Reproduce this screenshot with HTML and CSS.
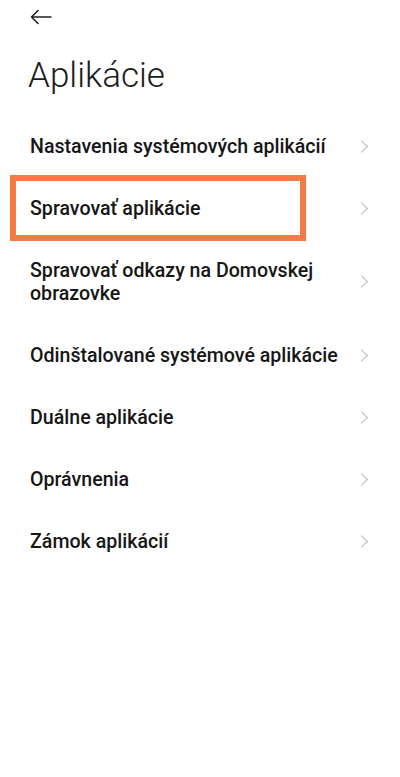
FILE: index.html
```html
<!DOCTYPE html>
<html lang="sk">
<head>
<meta charset="utf-8">
<link rel="stylesheet" href="styles.css">
</head>
<body>
<div class="screen">
  <header class="topbar">
    <svg class="back" width="22" height="16" viewBox="0 0 22 16" fill="none" stroke="#222" stroke-width="1.6" stroke-linecap="round" stroke-linejoin="round">
      <path d="M21 8H1.5M8 1.5L1.5 8L8 14.5"/>
    </svg>
  </header>
  <h1 class="title">Aplikácie</h1>
  <ul class="list">
    <li class="row"><span class="label">Nastavenia systémových aplikácií</span><span class="chev"></span></li>
    <li class="row highlighted"><span class="label">Spravovať aplikácie</span><span class="chev"></span><span class="mark"></span></li>
    <li class="row"><span class="label">Spravovať odkazy na Domovskej obrazovke</span><span class="chev"></span></li>
    <li class="row"><span class="label">Odinštalované systémové aplikácie</span><span class="chev"></span></li>
    <li class="row"><span class="label">Duálne aplikácie</span><span class="chev"></span></li>
    <li class="row"><span class="label">Oprávnenia</span><span class="chev"></span></li>
    <li class="row"><span class="label">Zámok aplikácií</span><span class="chev"></span></li>
  </ul>
</div>
</body>
</html>
```

FILE: styles.css
```css
html, body {
  margin: 0;
  padding: 0;
  background: #ffffff;
}
body {
  font-family: Roboto, "Noto Sans", "Liberation Sans", sans-serif;
  color: #1a1a1a;
  width: 400px;
  height: 777px;
  overflow: hidden;
}
.screen {
  display: flex;
  flex-direction: column;
}
.topbar {
  height: 34px;
  display: flex;
  align-items: center;
  padding-left: 30px;
}
.back {
  display: block;
}
.title {
  margin: 18px 0 0 28px;
  font-size: 35px;
  font-weight: 300;
  line-height: 48px;
  color: #1c1c1c;
  letter-spacing: 0;
}
.list {
  list-style: none;
  margin: 15px 0 0 0;
  padding: 0;
}
.row {
  position: relative;
  display: flex;
  align-items: center;
  justify-content: space-between;
  padding: 19.5px 30px 19.5px 30px;
  box-sizing: border-box;
}
.label {
  font-size: 19.6px;
  font-weight: 500;
  line-height: 23px;
  max-width: 312px;
  color: #161616;
}
.chev {
  flex: none;
  width: 8px;
  height: 8px;
  border-top: 1.5px solid #b4b4b4;
  border-right: 1.5px solid #b4b4b4;
  transform: rotate(45deg);
  margin-right: 4px;
}
.mark {
  position: absolute;
  left: 10px;
  top: -2px;
  width: 296px;
  height: 66px;
  box-sizing: border-box;
  border: 6px solid #f47a46;
  pointer-events: none;
}
```
